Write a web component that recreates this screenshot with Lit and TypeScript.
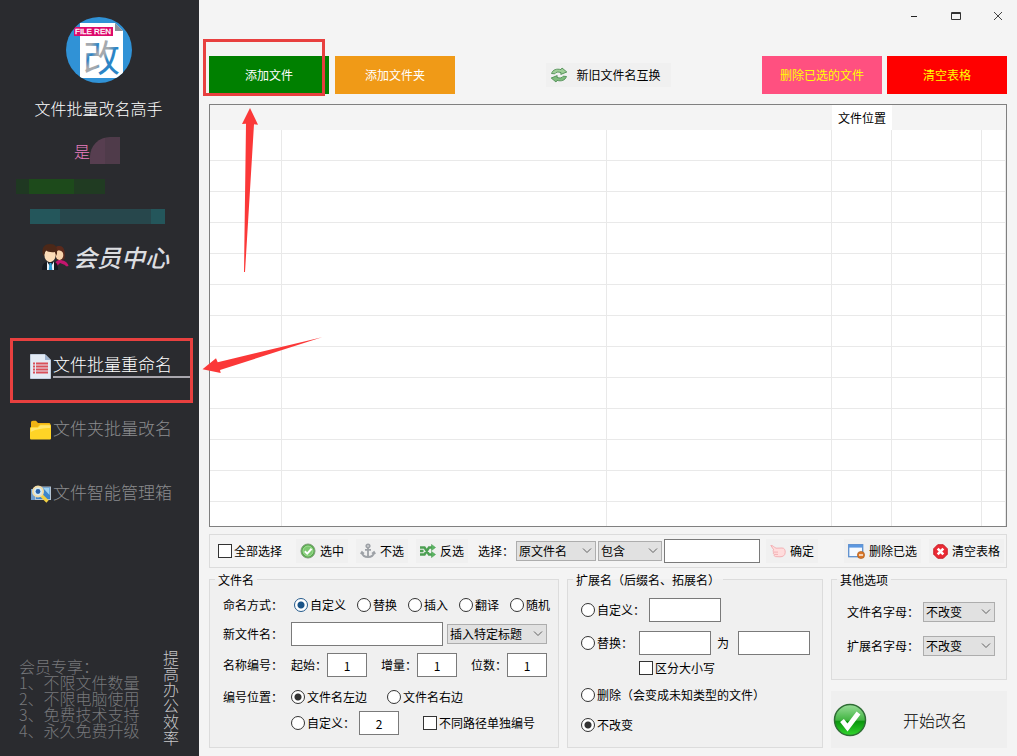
import { LitElement, html, css, svg } from "lit";
import { customElement, state } from "lit/decorators.js";

const icons = {
  swap: svg`<svg class="ico" viewBox="0 0 18 16" width="18" height="16">
    <path d="M1.500 6.500C3 2.500 6.500 1.500 11 2.600L12 1 16.800 5 10.800 7.400 11 5.600C8 4.600 6 5 4.800 6.800Z" fill="#9fce98" stroke="#4f8f54" stroke-width=".9"/>
    <path d="M16.500 9.500C15 13.500 11.500 14.500 7 13.400L6 15 1.200 11 7.200 8.600 7 10.400C10 11.400 12 11 13.200 9.200Z" fill="#7fbb7d" stroke="#4f8f54" stroke-width=".9"/></svg>`,
  ok: svg`<svg class="ico" viewBox="0 0 16 16" width="16" height="16">
    <circle cx="8" cy="8" r="7" fill="#55ad4b" stroke="#7d9c76"/><circle cx="8" cy="8" r="5" fill="#7cc870" stroke="#a5dc98"/>
    <path d="M4.800 8.200 7.200 10.600 11.600 5.800" fill="none" stroke="#fff" stroke-width="2"/></svg>`,
  anchor: svg`<svg class="ico" viewBox="0 0 16 16" width="16" height="16" fill="none" stroke="#9da1a6" stroke-width="1.800">
    <circle cx="8" cy="3" r="1.700"/><path d="M8 5V14M5 6.800H11M2 9.500C2.500 12.800 5 14 8 14S13.500 12.800 14 9.500M.8 11 2 9 4 10.600M15.200 11 14 9 12 10.600"/></svg>`,
  shuffle: svg`<svg class="ico" viewBox="0 0 16 14" width="16" height="14" fill="none" stroke="#4c9f52" stroke-width="2.400">
    <path d="M0 3.500H4.500L9 10.500H12M0 10.500H4.500L9 3.500H12M0 7H3.500"/><path d="M11.500 .5 15.500 3.500 11.500 6.500ZM11.500 7.500 15.500 10.500 11.500 13.500Z" fill="#5bb563" stroke="#4c9f52" stroke-width=".6"/></svg>`,
  hand: svg`<svg class="ico" viewBox="0 0 16 14" width="16" height="14">
    <path d="M.8 1.500C2 .8 4.500 3.500 6 4.200L12 4C14.500 4 15.300 6 15.200 8.500 15 11.500 13 12.800 10 12.800L5.500 12.600C3.800 12.200 4 10.800 4.500 10.400 3 10 3 8.600 3.800 8.100 2.600 7.500 2.800 6.200 3.800 5.900Z" fill="#ffdcdc" stroke="#f3b0b4"/>
    <path d="M4 8.100H8M4.600 10.400H8" stroke="#f3b0b4"/></svg>`,
  windowDelete: svg`<svg class="ico" viewBox="0 0 17 15" width="17" height="15">
    <rect x=".7" y=".7" width="14" height="12" fill="#f6faff" stroke="#5c8fce" stroke-width="1.300"/><rect x="1" y="1" width="13.500" height="2.600" fill="#5b97e0"/>
    <circle cx="13" cy="11" r="3.600" fill="#d9772a" stroke="#a85514" stroke-width=".6"/><path d="M11 11H15" stroke="#fff" stroke-width="1.300"/></svg>`,
  cross: svg`<svg class="ico" viewBox="0 0 16 16" width="15" height="15">
    <path d="M5 .8H11L15.200 5V11L11 15.200H5L.8 11V5Z" fill="#ea2a34" stroke="#c51820"/><path d="M5 5 11 11M11 5 5 11" stroke="#fff" stroke-width="2.800"/></svg>`,
  page: svg`<svg class="ico" viewBox="0 0 21 25" width="21" height="25">
    <path d="M.5 .5H15L20.500 6V24.500H.5Z" fill="#e4ebf5" stroke="#c3cfdf"/><path d="M15 .5V6H20.500Z" fill="#9db2cf"/>
    <path d="M3 9.500H18M3 12.500H18M3 15.500H18M3 18.500H18" stroke="#d9505a" stroke-width="1.800"/><path d="M5.500 8V20" stroke="#e4ebf5"/></svg>`,
  folder: svg`<svg class="ico" viewBox="0 0 21 20" width="21" height="20">
    <path d="M1 3C1 1.500 1.500 .8 3 .8H6L8 3H18.500C20 3 20.500 3.500 20.500 5V19H1Z" fill="#f0b414"/><path d="M0 8.500C0 7.500 .5 7 1.500 7H7.500L10 4.500H19.500C20.500 4.500 21 5 21 6V18C21 19 20.500 19.500 19.500 19.500H1.500C.5 19.500 0 19 0 18Z" fill="#ffd426"/>
    <path d="M.8 12V8.600Q.8 7.800 1.600 7.800H7.900L10.400 5.300H19.400Q20.200 5.300 20.200 6.200V8C14 8 6 9 .8 12Z" fill="#ffe56e"/></svg>`,
  search: svg`<svg class="ico" viewBox="0 0 21 18" width="21" height="18">
    <path d="M1 4H6V15H1Z" fill="#6d9ccc"/><rect x="5.500" y="2" width="15" height="12.500" fill="#3d86cc" stroke="#b4c3d2"/><path d="M13 3H19.500V10Z" fill="#9fd2f2"/>
    <path d="M11.500 10.500 17.500 16.500" stroke="#f2d043" stroke-width="3.200"/><circle cx="8" cy="6.500" r="5" fill="#d2ebf9" stroke="#f2dca6" stroke-width="2"/><circle cx="8" cy="6.500" r="2.400" fill="#2a62a8"/></svg>`,
  people: svg`<svg class="ico" viewBox="0 0 30 28" width="30" height="28">
    <path d="M14 26C14 19 17 17 20 17S28 19 28.500 23C27 23 26 24 25 22L20 20Z" fill="#c4156e"/><path d="M14 9C14 4 17 2.500 20 3 24 3.500 25.500 8 24.500 16L22 17H17Z" fill="#5b2a1c"/>
    <ellipse cx="19.500" cy="12" rx="3.800" ry="5" fill="#f7d3ac"/><path d="M15.500 9C17 6 21 7 24 10L22 5 17 5Z" fill="#5b2a1c"/>
    <path d="M2 27C2 21 4 19.500 8 18.500H13C17 19.500 18 21 18 27Z" fill="#171a20"/>
    <path d="M7 18.500 10.500 24 14 18.500V27H7Z" fill="#e9f2f8"/><path d="M9.500 20H11.500L12.300 27H8.800Z" fill="#2b9bd4"/>
    <ellipse cx="10" cy="12" rx="5.600" ry="7.200" fill="#fbdcb8"/><path d="M3.200 13C1 5 4 1 10 1S18 4 16.800 13L15.300 9C11 9.500 8 9 6 7.500L4.700 10Z" fill="#4c2818"/></svg>`,
  start: svg`<svg class="ico" viewBox="0 0 34 34" width="34" height="34">
    <defs><linearGradient id="g" x2="0" y2="1"><stop offset="0" stop-color="#9ade9a"/><stop offset=".5" stop-color="#43b543"/><stop offset=".55" stop-color="#0c960f"/><stop offset="1" stop-color="#32d62e"/></linearGradient></defs>
    <circle cx="17" cy="17" r="15.500" fill="url(#g)" stroke="#2f6d35" stroke-width="1.500"/><path d="M9 17.500 14.500 24.500 25.500 10" fill="none" stroke="#fff" stroke-width="4.800"/></svg>`,
};

@customElement("app-root")
export class AppRoot extends LitElement {
  @state() private columns = ["", "", "", "文件位置", "", ""];

  static styles = css`
    :host { display: block; font: 12px/16px "Noto Sans CJK SC", sans-serif; color: #000; }
    * { box-sizing: border-box; }
    button, input, select { font: inherit; color: inherit; margin: 0; border-radius: 0; }
    button { border: 0; padding: 0; display: flex; align-items: center; justify-content: center; white-space: nowrap; }
    .ico { display: block; flex: none; }
    .shell { position: relative; display: grid; grid-template-columns: 199px minmax(0, 1fr); min-height: 100vh; background: #f4f4f4; }

    .side { background: #2a2b2f; display: flex; flex-direction: column; padding: 17px 2px 10px 0; font-weight: 300; }
    .avatar { display: block; align-self: center; }
    .title { margin: 13px 0 0; font-size: 16px; line-height: 24px; font-weight: 300; color: #fff; text-align: center; }
    .user { display: flex; align-items: center; margin: 17px 0 0 74px; font-size: 16px; color: #ea7fc0; }
    .blur { width: 30px; height: 27px; border-radius: 20px 0 0 0; background: linear-gradient(90deg, #573e50 50%, #4f3b4a 50%); }
    .green { width: 89px; height: 15px; margin: 15px 0 0 16px; background: linear-gradient(90deg, #1f3822 15%, #1d4a1b 15% 65%, #203b22 65%); }
    .teal { width: 135px; height: 15px; margin: 15px 0 0 30px; background: linear-gradient(90deg, #24565b 22%, #27474c 22% 90%, #24565b 90%); }
    .member { display: flex; align-items: center; gap: 3px; height: 30px; margin: 18px 0 0 40px; font-size: 24px; font-weight: 500; font-style: italic; color: #dcdde0; text-decoration: none; }
    .nav { margin-top: 62px; }
    .nav-link { display: flex; align-items: center; gap: 2px; height: 64px; padding: 0 6px 0 30px; font-size: 17px; line-height: 20px; color: #8b8b8e; text-decoration: none; }
    .nav-text { flex: 1; padding-bottom: 2px; border-bottom: 2px solid transparent; }
    .nav-link.active { color: #fff; }
    .active .nav-text { border-color: #a9a7ae; }
    .foot { margin-top: auto; padding: 0 18px 0 19px; display: flex; align-items: center; justify-content: space-between; font-size: 16px; line-height: 16px; color: #77787b; }
    .foot p { margin: 0; }
    .motto { writing-mode: vertical-rl; color: #c8c8ca; }

    .main { display: flex; flex-direction: column; padding: 0 10px 8px; min-width: 0; }
    .titlebar { display: flex; justify-content: flex-end; gap: 24px; height: 32px; }
    .win { width: 18px; background: none; }
    .tools { display: flex; align-items: center; margin: 24px 0 10px; }
    .big { width: 120px; height: 38px; color: #fff; }
    .add { background: #008000; margin-right: 6px; }
    .add-dir { background: #f09a17; }
    .soft { background: #f0f0f0; gap: 4px; height: 24px; }
    .swap { margin: 0 auto; gap: 8px; padding: 0 10px 0 4px; }
    .del { background: #ff5080; color: #ff0; margin-right: 5px; }
    .clear { background: #f00; color: #ff0; }

    .sheet { flex: 1 1 0; min-height: 200px; overflow: hidden; border: 1px solid #808080; background: #fff; }
    .grid { width: 100%; table-layout: fixed; border-collapse: separate; border-spacing: 0; }
    .grid th { height: 25px; padding: 0; background: #f4f4f4; font-weight: 400; }
    .grid th.named { background: #fff; }
    .grid td { height: 31px; padding: 0; border: solid #e9e9e9; border-width: 0 1px 1px 0; }
    .c0 { width: 72px; } .c1 { width: 325px; } .c2 { width: 225px; } .c3 { width: 60px; } .c4 { width: 90px; }

    .bar { display: flex; align-items: center; height: 34px; margin: 7px 0 4px; padding: 0 2px 0 8px; border: 1px solid #dcdcdc; }
    .bar .soft { padding: 0 4px; }
    .check { display: inline-flex; align-items: center; gap: 2px; white-space: nowrap; }
    .tick, .radio { appearance: none; flex: none; width: 14px; height: 14px; background: #fff; border: 1px solid #333; }
    .radio { border-radius: 50%; }
    .radio:checked { background: radial-gradient(circle, #333 3px, #fff 4px); }
    .blue:checked { border-color: #245a8c; background: radial-gradient(circle, #1a5488 3px, #fff 4px); }
    .field { height: 24px; padding: 0; border: 1px solid #7a7a7a; background: #fff; text-align: center; }
    .pick { appearance: none; height: 20px; padding: 0 16px 0 2px; border: 1px solid #adadad; background: #e1e1e1 url("data:image/svg+xml,%3Csvg xmlns='http://www.w3.org/2000/svg' width='10' height='6'%3E%3Cpath d='M1 .5 5 4.500 9 .5' fill='none' stroke='%23606060'/%3E%3C/svg%3E") no-repeat right 3px center; }
    .w40 { width: 40px; } .w64 { width: 64px; } .w72 { width: 72px; } .w80 { width: 80px; } .w96 { width: 96px; } .w100 { width: 100px; } .w152 { width: 152px; }
    .mid { display: flex; align-items: center; gap: 8px; margin: 0 8px 0 6px; }
    .pickers { display: flex; align-items: center; margin: 0 auto 0 8px; gap: 2px; }
    .confirm { margin-left: 4px; }
    .end { display: flex; align-items: center; gap: 8px; }

    .options { display: grid; grid-template-columns: 350fr 256fr 176fr; gap: 8px; }
    .group { min-width: 0; margin: 0; padding: 0; border: 1px solid #dcdcdc; background: #f0f0f0; }
    .group legend { height: 15px; line-height: 15px; margin-left: 5px; padding: 0 3px; }
    .rows { display: grid; align-items: center; white-space: nowrap; }
    .name-rows { grid-template-columns: 68px 1fr; grid-template-rows: 28px 30px 32px 32px 20px; padding: 4px 0 12px 13px; }
    .ext-rows { grid-template-rows: 32px 34px 16px 38px 22px; padding: 7px 0 0 13px; }
    .other-rows { grid-template-columns: 76px 72px; grid-auto-rows: 34px; padding: 8px 0 16px 15px; }
    .line { display: flex; align-items: center; }
    .modes { gap: 11px; padding-left: 3px; }
    .gap4 { gap: 4px; }
    .gap14 { gap: 14px; }
    .gap20 { gap: 20px; }
    .gap24 { gap: 24px; }
    .from { margin-left: 6px; }
    .to { padding: 0 9px 0 6px; }
    .case { margin-left: 58px; }
    .stack { display: flex; flex-direction: column; gap: 11px; }
    .stack .group { flex: 1; }
    .start { height: 57px; background: #efefef; justify-content: flex-start; padding-left: 2px; gap: 36px; font-size: 16px; font-weight: 300; }
    .marks { position: absolute; left: 0; top: 0; pointer-events: none; }
  `;

  private radio(group: string, text: string, checked = false, cls = "") {
    return html`<label class="check"><input class="radio ${cls}" type="radio" name=${group} .checked=${checked} />${text}</label>`;
  }

  private tick(text: string, cls = "") {
    return html`<label class="check ${cls}"><input class="tick" type="checkbox" />${text}</label>`;
  }

  private number(text: string, value: string) {
    return html`<label class="line">${text}<input class="field w40" .value=${value} /></label>`;
  }

  private sidebar() {
    return html`<aside class="side">
      <svg class="avatar" viewBox="0 0 66 66" width="66" height="66">
        <defs><clipPath id="round"><circle cx="33" cy="33" r="33" /></clipPath>
          <linearGradient id="ink" x2="1" y2="1"><stop offset=".25" stop-color="#a5a9ae" /><stop offset=".35" stop-color="#2b84c6" /><stop offset=".42" stop-color="#a5a9ae" /><stop offset=".52" stop-color="#a5a9ae" /><stop offset=".62" stop-color="#2b84c6" /></linearGradient></defs>
        <g clip-path="url(#round)">
          <rect width="66" height="66" fill="#3092d6" /><path d="M14 6H49L57 14V61H14Z" fill="#fff" /><path d="M49 6V14H57Z" fill="#8b9299" />
          <rect x="8" y="10" width="39" height="9" fill="#dd0a6b" />
          <text x="9" y="17" font-family="Liberation Sans" font-size="8" font-weight="400" stroke="#fff" stroke-width=".3" fill="#fff">FILE REN</text>
          <text x="17" y="55" font-family="Noto Sans CJK SC" font-size="37" font-weight="400" fill="url(#ink)">改</text>
        </g>
      </svg>
      <h1 class="title">文件批量改名高手</h1>
      <div class="user">是<span class="blur"></span></div>
      <div class="green"></div>
      <div class="teal"></div>
      <a class="member" href="#member">${icons.people}会员中心</a>
      <nav class="nav">
        <a class="nav-link active" href="#files">${icons.page}<span class="nav-text">文件批量重命名</span></a>
        <a class="nav-link" href="#folders">${icons.folder}<span class="nav-text">文件夹批量改名</span></a>
        <a class="nav-link" href="#manage">${icons.search}<span class="nav-text">文件智能管理箱</span></a>
      </nav>
      <div class="foot">
        <div><p>会员专享：</p><p>1、不限文件数量</p><p>2、不限电脑使用</p><p>3、免费技术支持</p><p>4、永久免费升级</p></div>
        <div class="motto">提高办公效率</div>
      </div>
    </aside>`;
  }

  private selectionBar() {
    return html`<div class="bar">
      ${this.tick("全部选择")}
      <div class="pickers">
        <div class="mid">
          <button class="soft">${icons.ok}选中</button>
          <button class="soft">${icons.anchor}不选</button>
          <button class="soft">${icons.shuffle}反选</button>
        </div>
        <label for="by">选择：</label>
        <select id="by" class="pick w80"><option>原文件名</option></select>
        <select class="pick w64" aria-label="包含"><option>包含</option></select>
        <input class="field w96" aria-label="选择" />
        <button class="soft confirm">${icons.hand}确定</button>
      </div>
      <div class="end">
        <button class="soft">${icons.windowDelete}删除已选</button>
        <button class="soft">${icons.cross}清空表格</button>
      </div>
    </div>`;
  }

  private options() {
    return html`<div class="options">
      <fieldset class="group"><legend>文件名</legend>
        <div class="rows name-rows">
          <span>命名方式：</span>
          <div class="line modes">${this.radio("mode", "自定义", true, "blue")}${["替换", "插入", "翻译", "随机"].map((t) => this.radio("mode", t))}</div>
          <label for="fresh">新文件名：</label>
          <div class="line gap4"><input id="fresh" class="field w152" /><select class="pick w100" aria-label="插入特定标题"><option>插入特定标题</option></select></div>
          <span>名称编号：</span>
          <div class="line gap14">${this.number("起始：", "1")}${this.number("增量：", "1")}${this.number("位数：", "1")}</div>
          <span>编号位置：</span>
          <div class="line gap20">${this.radio("place", "文件名左边", true)}${this.radio("place", "文件名右边")}</div>
          <span></span>
          <div class="line gap24"><div class="line gap4">${this.radio("place", "自定义：")}<input class="field w40" aria-label="自定义" .value=${"2"} /></div>${this.tick("不同路径单独编号")}</div>
        </div>
      </fieldset>
      <fieldset class="group"><legend>扩展名（后缀名、拓展名）</legend>
        <div class="rows ext-rows">
          <div class="line gap4">${this.radio("ext", "自定义：")}<input class="field w72" aria-label="自定义" /></div>
          <div class="line">${this.radio("ext", "替换：")}<input class="field w72 from" aria-label="替换" /><label class="to" for="to">为</label><input id="to" class="field w72" /></div>
          ${this.tick("区分大小写", "case")}
          ${this.radio("ext", "删除（会变成未知类型的文件）")}
          ${this.radio("ext", "不改变", true)}
        </div>
      </fieldset>
      <div class="stack">
        <fieldset class="group"><legend>其他选项</legend>
          <div class="rows other-rows">
            <label for="fcase">文件名字母：</label><select id="fcase" class="pick w72"><option>不改变</option></select>
            <label for="ecase">扩展名字母：</label><select id="ecase" class="pick w72"><option>不改变</option></select>
          </div>
        </fieldset>
        <button class="start">${icons.start}开始改名</button>
      </div>
    </div>`;
  }

  render() {
    return html`<div class="shell">
      ${this.sidebar()}
      <main class="main">
        <div class="titlebar">
          <button class="win" aria-label="最小化"><svg width="12" height="12"><path d="M3 6.500H9" stroke="#222" /></svg></button>
          <button class="win" aria-label="最大化"><svg width="12" height="12"><path d="M1.500 2.500H10.500V9.500H1.500ZM1 3.500H11" fill="none" stroke="#333" /></svg></button>
          <button class="win" aria-label="关闭"><svg width="12" height="12"><path d="M2 2 10 10M10 2 2 10" stroke="#444" /></svg></button>
        </div>
        <div class="tools">
          <button class="big add">添加文件</button>
          <button class="big add-dir">添加文件夹</button>
          <button class="soft swap">${icons.swap}新旧文件名互换</button>
          <button class="big del">删除已选的文件</button>
          <button class="big clear">清空表格</button>
        </div>
        <div class="sheet">
          <table class="grid">
            <thead><tr>${this.columns.map((c, i) => html`<th class="c${i} ${c ? "named" : ""}">${c}</th>`)}</tr></thead>
            <tbody>${Array.from({ length: 13 }, () => html`<tr>${this.columns.map(() => html`<td></td>`)}</tr>`)}</tbody>
          </table>
        </div>
        ${this.selectionBar()}
        ${this.options()}
      </main>
      <svg class="marks" width="340" height="410" fill="none">
        <path d="M204.500 40.500H323.500V94.500H204.500ZM11.500 339.500H191.500V401.500H11.500Z" stroke="#e8403f" stroke-width="3" />
        <path d="M250 108 242 124 246 123.700 244 272H245L254 124.300 258 124.700ZM202.500 369.300 216 358.300 217.700 362.300 322 337.300 220 370 220.700 373Z" fill="#fb3838" />
      </svg>
    </div>`;
  }
}
